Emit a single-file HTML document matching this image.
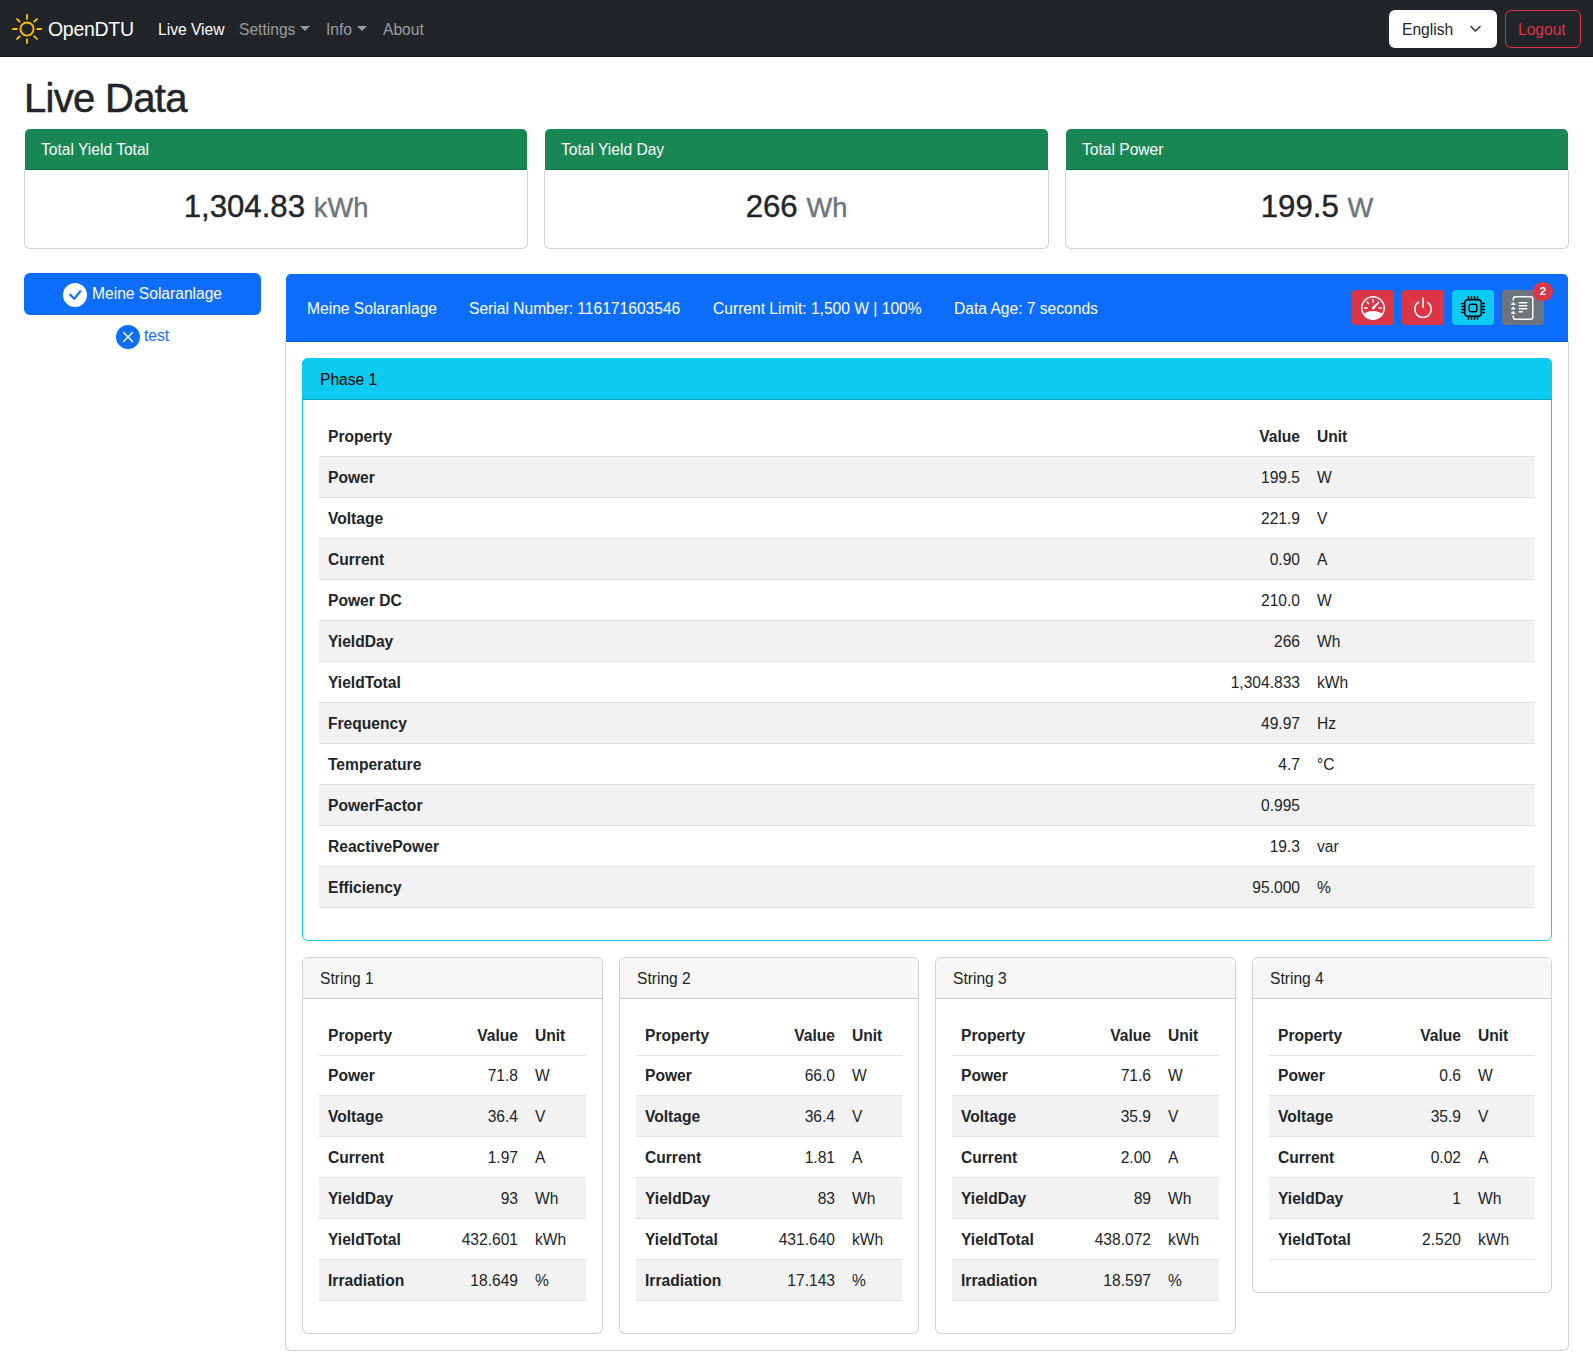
<!DOCTYPE html>
<html>
<head>
<meta charset="utf-8">
<style>
*{box-sizing:border-box;}
html,body{margin:0;padding:0;}
body{width:1593px;height:1359px;overflow:hidden;position:relative;background:#fff;color:#212529;font-family:"Liberation Sans",sans-serif;font-size:15.6px;line-height:24px;}
.abs{position:absolute;white-space:nowrap;}
svg{display:block;}
/* navbar */
.nav{position:absolute;left:0;top:0;width:1593px;height:57px;background:#212529;border-bottom:1px solid #15171a;}
.nav .brand{position:absolute;left:48px;top:19px;font-size:19.5px;line-height:20px;color:#fff;letter-spacing:-0.3px;}
.nav .link{position:absolute;top:18px;color:rgba(255,255,255,.55);}
.nav .caret{position:absolute;top:26px;width:0;height:0;border-left:5px solid transparent;border-right:5px solid transparent;border-top:5px solid rgba(255,255,255,.55);}
.select{position:absolute;left:1389px;top:10px;width:108px;height:38px;background:#fff;border-radius:6px;}
.logout{position:absolute;left:1505px;top:10px;width:76px;height:38px;border:1px solid #dc3545;border-radius:6px;color:#dc3545;}
h1{position:absolute;left:24px;top:74px;margin:0;font-size:40px;letter-spacing:-0.7px;-webkit-text-stroke:0.5px #212529;line-height:48px;font-weight:400;}
/* cards */
.card{position:absolute;border:1px solid rgba(0,0,0,.175);border-radius:6px;background:#fff;}
.card-h{position:absolute;left:-1px;top:-1px;right:-1px;height:42px;border-radius:6px 6px 0 0;border-bottom:1px solid rgba(0,0,0,.175);}
.green{background:#198754;color:#fff;border-color:#198754;}
.cap{position:absolute;left:-1px;top:-1px;right:-1px;height:42px;background:#fff;border-radius:6px 6px 0 0;}
.cap>div{position:absolute;left:1px;top:1px;right:1px;bottom:0;border-bottom:1px solid rgba(0,0,0,.175);border-radius:5px 5px 0 0;background:#198754;color:#fff;}
.tot .t{position:absolute;left:16px;top:9px;}
.tot .v{position:absolute;left:0;right:0;top:59px;text-align:center;font-size:31.2px;line-height:38px;}
.tot .v{-webkit-text-stroke:0.4px #212529;}
.tot .v small{font-size:27.3px;color:#6c757d;-webkit-text-stroke:0.4px #6c757d;}
.btn-inv{position:absolute;left:24px;top:273px;width:237px;height:42px;background:#0d6efd;border-radius:6px;color:#fff;}
table{border-collapse:collapse;position:absolute;table-layout:fixed;}
td,th{padding:9px 8px 7px 9px;border-bottom:1px solid #dee2e6;text-align:left;white-space:nowrap;}
th{font-weight:700;}
.r{text-align:right;}
.s1 tbody tr:nth-child(odd) td,.s1 tbody tr:nth-child(odd) th{background:#f2f2f2;}
.s2 tbody tr:nth-child(even) td,.s2 tbody tr:nth-child(even) th{background:#f2f2f2;}
.s2 tbody tr:first-child td,.s2 tbody tr:first-child th{padding-top:8px;}
.invbody{position:absolute;left:285px;top:341px;width:1284px;height:1010px;border:1px solid rgba(0,0,0,.175);border-top:none;border-radius:0 0 6px 6px;}
.invhead{position:absolute;left:286px;top:274px;width:1282px;height:68px;background:#0d6efd;color:#fff;border-bottom:1px solid rgba(0,0,0,.175);border-radius:5px 5px 0 0;}
.ibtn{position:absolute;top:16px;width:42px;height:35px;border-radius:4px;padding:6px 9px 5px 9px;}
.badge{position:absolute;left:1247px;top:8px;width:20px;height:18.5px;border-radius:10px;background:#dc3545;color:#fff;font-size:11.5px;font-weight:700;line-height:18.5px;text-align:center;}
.card-h2{position:absolute;left:0;top:0;right:0;height:41px;background:#f7f7f7;border-bottom:1px solid rgba(0,0,0,.175);border-radius:5px 5px 0 0;}
</style>
</head>
<body>
<!-- NAVBAR -->
<div class="nav">
  <svg class="abs" style="left:12px;top:14px" width="30" height="30" viewBox="0 0 16 16" fill="#ffc107"><path d="M8 11a3 3 0 1 1 0-6 3 3 0 0 1 0 6m0 1a4 4 0 1 0 0-8 4 4 0 0 0 0 8M8 0a.5.5 0 0 1 .5.5v2a.5.5 0 0 1-1 0v-2A.5.5 0 0 1 8 0m0 13a.5.5 0 0 1 .5.5v2a.5.5 0 0 1-1 0v-2A.5.5 0 0 1 8 13m8-5a.5.5 0 0 1-.5.5h-2a.5.5 0 0 1 0-1h2a.5.5 0 0 1 .5.5M3 8a.5.5 0 0 1-.5.5h-2a.5.5 0 0 1 0-1h2A.5.5 0 0 1 3 8m10.657-5.657a.5.5 0 0 1 0 .707l-1.414 1.415a.5.5 0 1 1-.707-.708l1.414-1.414a.5.5 0 0 1 .707 0m-9.193 9.193a.5.5 0 0 1 0 .707L3.05 13.657a.5.5 0 0 1-.707-.707l1.414-1.414a.5.5 0 0 1 .707 0m9.193 2.121a.5.5 0 0 1-.707 0l-1.414-1.414a.5.5 0 0 1 .707-.707l1.414 1.414a.5.5 0 0 1 0 .707M4.464 4.465a.5.5 0 0 1-.707 0L2.343 3.05a.5.5 0 1 1 .707-.707l1.414 1.414a.5.5 0 0 1 0 .708"/></svg>
  <div class="brand">OpenDTU</div>
  <div class="link" style="left:158px;color:#fff">Live View</div>
  <div class="link" style="left:239px">Settings</div>
  <div class="caret" style="left:300px"></div>
  <div class="link" style="left:326px">Info</div>
  <div class="caret" style="left:357px"></div>
  <div class="link" style="left:383px">About</div>
  <div class="select">
    <div class="abs" style="left:13px;top:8px;color:#212529">English</div>
    <svg class="abs" style="left:81px;top:15px" width="12" height="9" viewBox="0 0 12 9"><path d="M1 1.5 5.5 6 10 1.5" fill="none" stroke="#343a40" stroke-width="1.6" stroke-linecap="round" stroke-linejoin="round"/></svg>
  </div>
  <div class="logout"><div class="abs" style="left:12px;top:7px">Logout</div></div>
</div>

<h1>Live Data</h1>

<!-- TOTAL CARDS -->
<div class="card tot" style="left:24px;top:128px;width:504px;height:121px">
  <div class="cap"><div><div class="t">Total Yield Total</div></div></div>
  <div class="v">1,304.83 <small>kWh</small></div>
</div>
<div class="card tot" style="left:544px;top:128px;width:505px;height:121px">
  <div class="cap"><div><div class="t">Total Yield Day</div></div></div>
  <div class="v">266 <small>Wh</small></div>
</div>
<div class="card tot" style="left:1065px;top:128px;width:504px;height:121px">
  <div class="cap"><div><div class="t">Total Power</div></div></div>
  <div class="v">199.5 <small>W</small></div>
</div>

<!-- INVERTER LIST -->
<div class="btn-inv">
  <svg class="abs" style="left:39px;top:10px" width="24" height="24" viewBox="0 0 16 16" fill="#fff"><path d="M16 8A8 8 0 1 1 0 8a8 8 0 0 1 16 0m-3.97-3.03a.75.75 0 0 0-1.08.022L7.477 9.417 5.384 7.323a.75.75 0 0 0-1.06 1.06L6.97 11.03a.75.75 0 0 0 1.079-.02l3.992-4.99a.75.75 0 0 0-.01-1.05z"/></svg>
  <div class="abs" style="left:68px;top:9px">Meine Solaranlage</div>
</div>
<svg class="abs" style="left:116px;top:325px" width="24" height="24" viewBox="0 0 16 16" fill="#0d6efd"><path d="M16 8A8 8 0 1 1 0 8a8 8 0 0 1 16 0M5.354 4.646a.5.5 0 1 0-.708.708L7.293 8l-2.647 2.646a.5.5 0 0 0 .708.708L8 8.707l2.646 2.647a.5.5 0 0 0 .708-.708L8.707 8l2.647-2.646a.5.5 0 0 0-.708-.708L8 7.293z"/></svg>
<div class="abs" style="left:144px;top:324px;color:#0d6efd">test</div>

<!-- INVERTER CARD -->
<div class="invbody"></div>
<div class="invhead">
  <div class="abs" style="left:21px;top:23px">Meine Solaranlage</div>
  <div class="abs" style="left:183px;top:23px">Serial Number: 116171603546</div>
  <div class="abs" style="left:427px;top:23px">Current Limit: 1,500 W | 100%</div>
  <div class="abs" style="left:668px;top:23px">Data Age: 7 seconds</div>
  <div class="ibtn" style="left:1066px;background:#dc3545"><svg width="24" height="24" viewBox="0 0 16 16" fill="#fff"><path d="M8 2a.5.5 0 0 1 .5.5V4a.5.5 0 0 1-1 0V2.5A.5.5 0 0 1 8 2M3.732 3.732a.5.5 0 0 1 .707 0l.915.914a.5.5 0 1 1-.708.708l-.914-.915a.5.5 0 0 1 0-.707M2 8a.5.5 0 0 1 .5-.5h1.586a.5.5 0 0 1 0 1H2.5A.5.5 0 0 1 2 8m9.5 0a.5.5 0 0 1 .5-.5h1.5a.5.5 0 0 1 0 1H12a.5.5 0 0 1-.5-.5m.754-4.246a.39.39 0 0 0-.527-.02L7.547 7.31A.91.91 0 1 0 8.85 8.569l3.434-4.297a.39.39 0 0 0-.029-.518z"/><path fill-rule="evenodd" d="M6.664 15.889A8 8 0 1 1 9.336.11a8 8 0 0 1-2.672 15.78zm-4.665-4.283A11.950 11.950 0 0 1 8 10c2.186 0 4.236.585 6.001 1.606a7 7 0 1 0-12.002 0"/></svg></div>
  <div class="ibtn" style="left:1116px;background:#dc3545"><svg width="24" height="24" viewBox="0 0 16 16" fill="#fff"><path d="M7.5 1v7h1V1z"/><path d="M3 8.812a5 5 0 0 1 2.578-4.375l-.485-.874A6 6 0 1 0 11 3.616l-.501.865A5 5 0 1 1 3 8.812"/></svg></div>
  <div class="ibtn" style="left:1166px;background:#0dcaf0"><svg width="24" height="24" viewBox="0 0 16 16" fill="#000"><path d="M5 0a.5.5 0 0 1 .5.5V2h1V.5a.5.5 0 0 1 1 0V2h1V.5a.5.5 0 0 1 1 0V2h1V.5a.5.5 0 0 1 1 0V2A2.5 2.5 0 0 1 14 4.5h1.5a.5.5 0 0 1 0 1H14v1h1.5a.5.5 0 0 1 0 1H14v1h1.5a.5.5 0 0 1 0 1H14v1h1.5a.5.5 0 0 1 0 1H14a2.5 2.5 0 0 1-2.5 2.5v1.5a.5.5 0 0 1-1 0V14h-1v1.5a.5.5 0 0 1-1 0V14h-1v1.5a.5.5 0 0 1-1 0V14h-1v1.5a.5.5 0 0 1-1 0V14A2.5 2.5 0 0 1 2 11.5H.5a.5.5 0 0 1 0-1H2v-1H.5a.5.5 0 0 1 0-1H2v-1H.5a.5.5 0 0 1 0-1H2v-1H.5a.5.5 0 0 1 0-1H2A2.5 2.5 0 0 1 4.5 2V.5A.5.5 0 0 1 5 0m-.5 3A1.5 1.5 0 0 0 3 4.5v7A1.5 1.5 0 0 0 4.5 13h7a1.5 1.5 0 0 0 1.5-1.5v-7A1.5 1.5 0 0 0 11.5 3zM5 6.5A1.5 1.5 0 0 1 6.5 5h3A1.5 1.5 0 0 1 11 6.5v3A1.5 1.5 0 0 1 9.5 11h-3A1.5 1.5 0 0 1 5 9.5zM6.5 6a.5.5 0 0 0-.5.5v3a.5.5 0 0 0 .5.5h3a.5.5 0 0 0 .5-.5v-3a.5.5 0 0 0-.5-.5z"/></svg></div>
  <div class="ibtn" style="left:1216px;background:#6c757d"><svg width="24" height="24" viewBox="0 0 16 16" fill="#fff"><path d="M5 10.5a.5.5 0 0 1 .5-.5h2a.5.5 0 0 1 0 1h-2a.5.5 0 0 1-.5-.5m0-2a.5.5 0 0 1 .5-.5h5a.5.5 0 0 1 0 1h-5a.5.5 0 0 1-.5-.5m0-2a.5.5 0 0 1 .5-.5h5a.5.5 0 0 1 0 1h-5a.5.5 0 0 1-.5-.5m0-2a.5.5 0 0 1 .5-.5h5a.5.5 0 0 1 0 1h-5a.5.5 0 0 1-.5-.5"/><path d="M3 0h10a2 2 0 0 1 2 2v12a2 2 0 0 1-2 2H3a2 2 0 0 1-2-2v-1h1v1a1 1 0 0 0 1 1h10a1 1 0 0 0 1-1V2a1 1 0 0 0-1-1H3a1 1 0 0 0-1 1v1H1V2a2 2 0 0 1 2-2"/><path d="M1 5v-.5a.5.5 0 0 1 1 0V5h.5a.5.5 0 0 1 0 1h-2a.5.5 0 0 1 0-1zm0 3v-.5a.5.5 0 0 1 1 0V8h.5a.5.5 0 0 1 0 1h-2a.5.5 0 0 1 0-1zm0 3v-.5a.5.5 0 0 1 1 0v.5h.5a.5.5 0 0 1 0 1h-2a.5.5 0 0 1 0-1z"/></svg></div>
  <div class="badge">2</div>
</div>
<div class="card" style="left:302px;top:358px;width:1250px;height:583px;border-color:#0dcaf0">
  <div class="card-h" style="background:#0dcaf0;color:#000;border-color:rgba(0,0,0,.175)"><div class="abs" style="left:18px;top:10px">Phase 1</div></div>
</div>
<table class="s1" style="left:319px;top:416px;width:1216px">
<colgroup><col style="width:594px"><col style="width:395px"><col style="width:227px"></colgroup>
<thead><tr><th>Property</th><th class="r">Value</th><th>Unit</th></tr></thead><tbody>
<tr><th>Power</th><td class="r">199.5</td><td>W</td></tr>
<tr><th>Voltage</th><td class="r">221.9</td><td>V</td></tr>
<tr><th>Current</th><td class="r">0.90</td><td>A</td></tr>
<tr><th>Power DC</th><td class="r">210.0</td><td>W</td></tr>
<tr><th>YieldDay</th><td class="r">266</td><td>Wh</td></tr>
<tr><th>YieldTotal</th><td class="r">1,304.833</td><td>kWh</td></tr>
<tr><th>Frequency</th><td class="r">49.97</td><td>Hz</td></tr>
<tr><th>Temperature</th><td class="r">4.7</td><td>°C</td></tr>
<tr><th>PowerFactor</th><td class="r">0.995</td><td></td></tr>
<tr><th>ReactivePower</th><td class="r">19.3</td><td>var</td></tr>
<tr><th>Efficiency</th><td class="r">95.000</td><td>%</td></tr>
</tbody></table>
<div class="card" style="left:302px;top:957px;width:301px;height:377px">
  <div class="card-h2"><div class="abs" style="left:17px;top:9px">String 1</div></div>
</div>
<table class="s2" style="left:319px;top:1015px;width:267px">
<colgroup><col style="width:122px"><col style="width:85px"><col style="width:60px"></colgroup>
<thead><tr><th>Property</th><th class="r">Value</th><th>Unit</th></tr></thead><tbody>
<tr><th>Power</th><td class="r">71.8</td><td>W</td></tr>
<tr><th>Voltage</th><td class="r">36.4</td><td>V</td></tr>
<tr><th>Current</th><td class="r">1.97</td><td>A</td></tr>
<tr><th>YieldDay</th><td class="r">93</td><td>Wh</td></tr>
<tr><th>YieldTotal</th><td class="r">432.601</td><td>kWh</td></tr>
<tr><th>Irradiation</th><td class="r">18.649</td><td>%</td></tr>
</tbody></table>
<div class="card" style="left:619px;top:957px;width:300px;height:377px">
  <div class="card-h2"><div class="abs" style="left:17px;top:9px">String 2</div></div>
</div>
<table class="s2" style="left:636px;top:1015px;width:266px">
<colgroup><col style="width:122px"><col style="width:85px"><col style="width:59px"></colgroup>
<thead><tr><th>Property</th><th class="r">Value</th><th>Unit</th></tr></thead><tbody>
<tr><th>Power</th><td class="r">66.0</td><td>W</td></tr>
<tr><th>Voltage</th><td class="r">36.4</td><td>V</td></tr>
<tr><th>Current</th><td class="r">1.81</td><td>A</td></tr>
<tr><th>YieldDay</th><td class="r">83</td><td>Wh</td></tr>
<tr><th>YieldTotal</th><td class="r">431.640</td><td>kWh</td></tr>
<tr><th>Irradiation</th><td class="r">17.143</td><td>%</td></tr>
</tbody></table>
<div class="card" style="left:935px;top:957px;width:301px;height:377px">
  <div class="card-h2"><div class="abs" style="left:17px;top:9px">String 3</div></div>
</div>
<table class="s2" style="left:952px;top:1015px;width:267px">
<colgroup><col style="width:122px"><col style="width:85px"><col style="width:60px"></colgroup>
<thead><tr><th>Property</th><th class="r">Value</th><th>Unit</th></tr></thead><tbody>
<tr><th>Power</th><td class="r">71.6</td><td>W</td></tr>
<tr><th>Voltage</th><td class="r">35.9</td><td>V</td></tr>
<tr><th>Current</th><td class="r">2.00</td><td>A</td></tr>
<tr><th>YieldDay</th><td class="r">89</td><td>Wh</td></tr>
<tr><th>YieldTotal</th><td class="r">438.072</td><td>kWh</td></tr>
<tr><th>Irradiation</th><td class="r">18.597</td><td>%</td></tr>
</tbody></table>
<div class="card" style="left:1252px;top:957px;width:300px;height:336px">
  <div class="card-h2"><div class="abs" style="left:17px;top:9px">String 4</div></div>
</div>
<table class="s2" style="left:1269px;top:1015px;width:266px">
<colgroup><col style="width:115px"><col style="width:85px"><col style="width:66px"></colgroup>
<thead><tr><th>Property</th><th class="r">Value</th><th>Unit</th></tr></thead><tbody>
<tr><th>Power</th><td class="r">0.6</td><td>W</td></tr>
<tr><th>Voltage</th><td class="r">35.9</td><td>V</td></tr>
<tr><th>Current</th><td class="r">0.02</td><td>A</td></tr>
<tr><th>YieldDay</th><td class="r">1</td><td>Wh</td></tr>
<tr><th>YieldTotal</th><td class="r">2.520</td><td>kWh</td></tr>
</tbody></table>
</body>
</html>
